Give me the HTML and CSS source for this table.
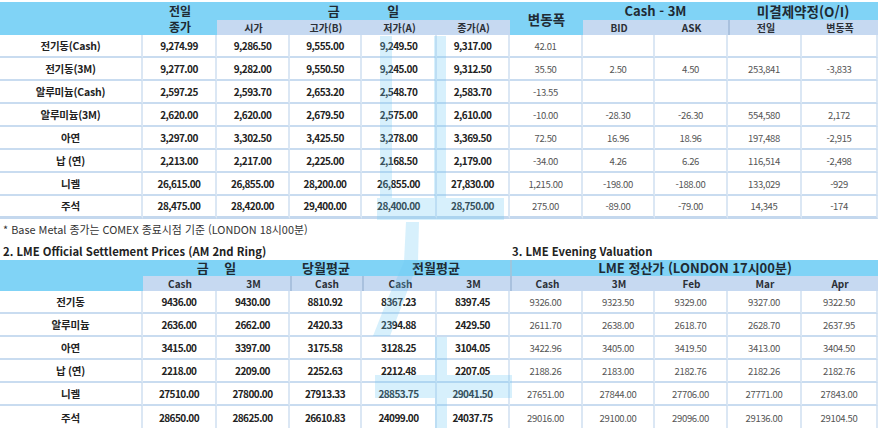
FILE: index.html
```html
<!DOCTYPE html>
<html lang="ko">
<head>
<meta charset="utf-8">
<title>LME</title>
<link rel="stylesheet" href="styles.css">
</head>
<body>
<div class="page">
  <table class="grid top">
    <colgroup>
      <col class="c-name"><col class="c74"><col class="c73"><col class="c72"><col class="c75"><col class="c73"><col class="c73"><col class="c72"><col class="c73"><col class="c74"><col class="c76">
    </colgroup>
    <thead>
      <tr class="h1">
        <th rowspan="2"></th>
        <th rowspan="2" class="two">전일<br>종가</th>
        <th colspan="4" class="spread">금 일</th>
        <th rowspan="2" class="big">변동폭</th>
        <th colspan="2">Cash - 3M</th>
        <th colspan="2" class="big">미결제약정(O/I)</th>
      </tr>
      <tr class="h2">
        <th class="s">시가</th><th class="s">고가(B)</th><th class="s">저가(A)</th><th class="s">종가(A)</th>
        <th class="s">BID</th><th class="s">ASK</th><th class="s sep">전일</th><th class="s">변동폭</th>
      </tr>
    </thead>
    <tbody>
      <tr><td class="name">전기동(Cash)</td><td>9,274.99</td><td>9,286.50</td><td>9,555.00</td><td>9,249.50</td><td>9,317.00</td><td class="v">42.01</td><td class="v"></td><td class="v"></td><td class="v"></td><td class="v"></td></tr>
      <tr><td class="name">전기동(3M)</td><td>9,277.00</td><td>9,282.00</td><td>9,550.50</td><td>9,245.00</td><td>9,312.50</td><td class="v">35.50</td><td class="v">2.50</td><td class="v">4.50</td><td class="v">253,841</td><td class="v">-3,833</td></tr>
      <tr><td class="name">알루미늄(Cash)</td><td>2,597.25</td><td>2,593.70</td><td>2,653.20</td><td>2,548.70</td><td>2,583.70</td><td class="v">-13.55</td><td class="v"></td><td class="v"></td><td class="v"></td><td class="v"></td></tr>
      <tr><td class="name">알루미늄(3M)</td><td>2,620.00</td><td>2,620.00</td><td>2,679.50</td><td>2,575.00</td><td>2,610.00</td><td class="v">-10.00</td><td class="v">-28.30</td><td class="v">-26.30</td><td class="v">554,580</td><td class="v">2,172</td></tr>
      <tr><td class="name">아연</td><td>3,297.00</td><td>3,302.50</td><td>3,425.50</td><td>3,278.00</td><td>3,369.50</td><td class="v">72.50</td><td class="v">16.96</td><td class="v">18.96</td><td class="v">197,488</td><td class="v">-2,915</td></tr>
      <tr><td class="name">납 (연)</td><td>2,213.00</td><td>2,217.00</td><td>2,225.00</td><td>2,168.50</td><td>2,179.00</td><td class="v">-34.00</td><td class="v">4.26</td><td class="v">6.26</td><td class="v">116,514</td><td class="v">-2,498</td></tr>
      <tr><td class="name">니켈</td><td>26,615.00</td><td>26,855.00</td><td>28,200.00</td><td>26,855.00</td><td>27,830.00</td><td class="v">1,215.00</td><td class="v">-198.00</td><td class="v">-188.00</td><td class="v">133,029</td><td class="v">-929</td></tr>
      <tr class="last"><td class="name">주석</td><td>28,475.00</td><td>28,420.00</td><td>29,400.00</td><td>28,400.00</td><td>28,750.00</td><td class="v">275.00</td><td class="v">-89.00</td><td class="v">-79.00</td><td class="v">14,345</td><td class="v">-174</td></tr>
    </tbody>
  </table>

  <p class="note">* Base Metal 종가는 COMEX 종료시점 기준 (LONDON 18시00분)</p>

  <div class="titles">
    <div class="title left">2. LME Official Settlement Prices (AM 2nd Ring)</div>
    <div class="title right">3. LME Evening Valuation</div>
  </div>

  <table class="grid bottom">
    <colgroup>
      <col class="c-name"><col class="c74"><col class="c73"><col class="c72"><col class="c75"><col class="c73"><col class="c73"><col class="c72"><col class="c73"><col class="c74"><col class="c76">
    </colgroup>
    <thead>
      <tr class="h1 b1">
        <th rowspan="2"></th>
        <th colspan="2" class="spread2">금 일</th>
        <th>당월평균</th>
        <th colspan="2">전월평균</th>
        <th colspan="5" class="sepg">LME 정산가 (LONDON 17시00분)</th>
      </tr>
      <tr class="h2">
        <th class="s">Cash</th><th class="s">3M</th><th class="s sep">Cash</th><th class="s sep">Cash</th><th class="s">3M</th>
        <th class="s sep">Cash</th><th class="s">3M</th><th class="s">Feb</th><th class="s">Mar</th><th class="s">Apr</th>
      </tr>
    </thead>
    <tbody>
      <tr><td class="name">전기동</td><td>9436.00</td><td>9430.00</td><td>8810.92</td><td>8367.23</td><td>8397.45</td><td class="v">9326.00</td><td class="v">9323.50</td><td class="v">9329.00</td><td class="v">9327.00</td><td class="v">9322.50</td></tr>
      <tr><td class="name">알루미늄</td><td>2636.00</td><td>2662.00</td><td>2420.33</td><td>2394.88</td><td>2429.50</td><td class="v">2611.70</td><td class="v">2638.00</td><td class="v">2618.70</td><td class="v">2628.70</td><td class="v">2637.95</td></tr>
      <tr><td class="name">아연</td><td>3415.00</td><td>3397.00</td><td>3175.58</td><td>3128.25</td><td>3104.05</td><td class="v">3422.96</td><td class="v">3405.00</td><td class="v">3419.50</td><td class="v">3413.00</td><td class="v">3404.50</td></tr>
      <tr><td class="name">납 (연)</td><td>2218.00</td><td>2209.00</td><td>2252.63</td><td>2212.48</td><td>2207.05</td><td class="v">2188.26</td><td class="v">2183.00</td><td class="v">2182.76</td><td class="v">2182.26</td><td class="v">2182.76</td></tr>
      <tr><td class="name">니켈</td><td>27510.00</td><td>27800.00</td><td>27913.33</td><td>28853.75</td><td>29041.50</td><td class="v">27651.00</td><td class="v">27844.00</td><td class="v">27706.00</td><td class="v">27771.00</td><td class="v">27843.00</td></tr>
      <tr><td class="name">주석</td><td>28650.00</td><td>28625.00</td><td>26610.83</td><td>24099.00</td><td>24037.75</td><td class="v">29016.00</td><td class="v">29100.00</td><td class="v">29096.00</td><td class="v">29136.00</td><td class="v">29104.50</td></tr>
    </tbody>
  </table>

  <svg class="watermark" width="878" height="428" viewBox="0 0 878 428" aria-hidden="true">
    <g fill="rgb(110,200,245)" fill-opacity="0.28">
      <rect x="380" y="36" width="12" height="162"/>
      <rect x="434" y="36" width="12" height="162"/>
      <rect x="377" y="198" width="127" height="22"/>
      <polygon points="406,222 419,222 418,262 404,300 390,336 373,336 388,298 404,262"/>
      <rect x="375" y="375" width="137" height="23"/>
      <rect x="435" y="337" width="12" height="38"/>
      <rect x="435" y="398" width="12" height="30"/>
    </g>
  </svg>
</div>
</body>
</html>
```

FILE: styles.css
```css
body {
  margin: 0;
  background: #ffffff;
  color: #222222;
  font-family: "Noto Sans CJK KR", "Noto Sans", sans-serif;
}

.page {
  position: relative;
  width: 878px;
  height: 428px;
  overflow: hidden;
  padding-top: 2px;
  box-sizing: border-box;
}

.grid {
  border-collapse: separate;
  border-spacing: 0;
  table-layout: fixed;
  width: 878px;
}

.c-name { width: 143px; }
.c72 { width: 72px; }
.c73 { width: 73px; }
.c74 { width: 74px; }
.c75 { width: 75px; }
.c76 { width: 76px; }

.grid th,
.grid td {
  padding: 0;
  text-align: center;
  vertical-align: middle;
  white-space: nowrap;
}

.grid td { overflow: hidden; }

.grid thead th {
  background: #80d3f6;
  font-size: 13px;
  font-weight: 700;
  color: #1f2a33;
  line-height: 16px;
}

.grid thead th.two { font-size: 12px; }
.grid thead th.big { font-size: 13.5px; }

.grid thead th.s {
  background: #c6d9f1;
  font-size: 10px;
  line-height: 13px;
  color: #2b2f36;
}

.grid thead th.sep {
  border-left: 2px solid #a9c1de;
}

.grid thead th.sepg {
  border-left: 2px solid #9cc6de;
}

.h1 { height: 18px; }
.h2 { height: 15px; }
.b1 { height: 15px; }
.b1 th { font-size: 14px; line-height: 15px; }

.spread { word-spacing: 44px; }
.spread2 { word-spacing: 12px; }

.grid tbody tr { height: 23px; }

.grid tbody td {
  border-bottom: 2px solid #c9dcf0;
  border-right: 2px solid #dbe7f4;
  font-size: 10px;
  font-weight: 700;
  letter-spacing: -0.55px;
  color: #222222;
  line-height: 14px;
}

.grid tbody tr.last td {
  border-bottom: 3px solid #c4d8ee;
}

.grid tbody td.name {
  font-size: 10.5px;
  letter-spacing: -0.2px;
}

.grid tbody td.v {
  font-size: 9.5px;
  font-weight: 400;
  letter-spacing: -0.35px;
  color: #555555;
}

.grid.bottom tbody tr:last-child td {
  border-bottom: 0;
}

.note {
  margin: 3px 0 0 0;
  padding-left: 3px;
  font-size: 10.9px;
  line-height: 15px;
  color: #333333;
}

.titles {
  display: flex;
  height: 23px;
  align-items: flex-end;
}

.title {
  font-size: 11.3px;
  font-weight: 700;
  line-height: 16px;
  color: #222222;
  padding-bottom: 1px;
}

.title.left {
  width: 510px;
  padding-left: 3px;
  box-sizing: border-box;
}

.title.right {
  padding-left: 2px;
}

.watermark {
  position: absolute;
  left: 0;
  top: 0;
  pointer-events: none;
}
```
